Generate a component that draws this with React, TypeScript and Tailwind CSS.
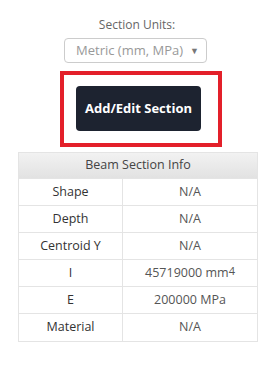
import React from "react";

const rows: { label: string; value: React.ReactNode }[] = [
  { label: "Shape", value: "N/A" },
  { label: "Depth", value: "N/A" },
  { label: "Centroid Y", value: "N/A" },
  {
    label: "I",
    value: (
      <span>
        45719000 mm<sup className="text-[11px] relative top-[-2px]">4</sup>
      </span>
    ),
  },
  { label: "E", value: "200000 MPa" },
  { label: "Material", value: "N/A" },
];

export default function App() {
  return (
    <div
      className="w-[274px] h-[369px] bg-white flex flex-col items-start"
      style={{ fontFamily: '"Open Sans", "Noto Sans", sans-serif' }}
    >
      <div className="w-full text-center text-[12px] leading-[16px] text-[#666] mt-[17px]">
        Section Units:
      </div>
      <div className="ml-[64px] mt-[5px] w-[143px] h-[25px] border border-[#ccc] rounded-[4px] flex items-center justify-between pl-[11px] pr-[7px]">
        <span className="text-[13px] text-[#999] leading-none">Metric (mm, MPa)</span>
        <span className="text-[9px] text-[#777] leading-none">▼</span>
      </div>
      <div className="ml-[60px] mt-[8px] w-[162px] h-[76px] border-4 border-[#e3202a] flex items-start pl-[12px] pt-[11px]">
        <div className="w-[125px] h-[45px] bg-[#1d2330] rounded-[4px] flex items-center justify-center">
          <span className="text-white font-bold text-[13px] leading-none">Add/Edit Section</span>
        </div>
      </div>
      <div className="ml-[18px] mt-[5px] w-[240px] border border-[#e4e4e4]">
        <div className="h-[26px] flex items-center justify-center bg-gradient-to-b from-[#f2f2f2] to-[#e2e2e2] text-[12.5px] text-[#444] border-b border-[#e4e4e4]">
          Beam Section Info
        </div>
        {rows.map((r, i) => (
          <div
            key={r.label}
            className={`h-[27px] flex ${i < rows.length - 1 ? "border-b border-[#e4e4e4]" : ""}`}
          >
            <div className="w-[104px] flex items-center justify-center text-[12.5px] text-[#333] border-r border-[#e4e4e4]">
              {r.label}
            </div>
            <div className="flex-1 flex items-center justify-center text-[12.5px] text-[#555]">
              {r.value}
            </div>
          </div>
        ))}
      </div>
    </div>
  );
}
